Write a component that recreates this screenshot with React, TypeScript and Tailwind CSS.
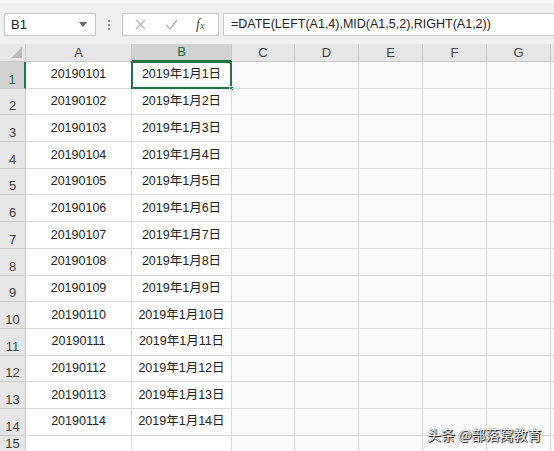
import React from 'react';

const cols = [
  { key: 'A', w: 'w-[106px]' },
  { key: 'B', w: 'w-[100px]' },
  { key: 'C', w: 'w-[63px]' },
  { key: 'D', w: 'w-[64px]' },
  { key: 'E', w: 'w-[64px]' },
  { key: 'F', w: 'w-[64px]' },
  { key: 'G', w: 'w-[64px]' },
];

const rows = Array.from({ length: 14 }, (_, i) => ({
  n: i + 1,
  a: `201901${String(i + 1).padStart(2, '0')}`,
  b: `2019年1月${i + 1}日`,
}));

const font = "font-['Liberation_Sans','Noto_Sans_CJK_SC',sans-serif]";

const Corner = () => (
  <div className="relative w-[26px] shrink-0 h-full border-r border-b border-[#c8c8c8] bg-[#e6e6e6]">
    <svg className="absolute right-[3px] bottom-[3px]" width="11" height="11" viewBox="0 0 11 11">
      <polygon points="11,0 11,11 0,11" fill="#b9b9b9" />
    </svg>
  </div>
);

const App = () => {
  return (
    <div className={`relative w-[554px] h-[451px] overflow-hidden bg-[#f0f0f0] ${font} text-[#222]`}>
      {/* formula bar */}
      <div className="h-[44px] border-t-[3px] border-[#f8f8f8] flex items-start pt-[10px] pl-[4px]">
        <div className="w-[92px] h-[23px] bg-white border border-[#c6c6c6] flex items-center justify-between pl-[6px] pr-[8px] text-[13px]">
          <span>B1</span>
          <svg width="8" height="5" viewBox="0 0 8 5"><polygon points="0,0 8,0 4,5" fill="#666" /></svg>
        </div>
        <div className="w-[26px] h-[23px] flex flex-col items-center justify-center gap-[2px]">
          <span className="w-[2px] h-[2px] bg-[#9a9a9a]" />
          <span className="w-[2px] h-[2px] bg-[#9a9a9a]" />
          <span className="w-[2px] h-[2px] bg-[#9a9a9a]" />
        </div>
        <div className="w-[97px] h-[23px] bg-white border border-[#c6c6c6] flex items-center">
          <svg className="ml-[12px]" width="11" height="11" viewBox="0 0 11 11">
            <path d="M1 1 L10 10 M10 1 L1 10" stroke="#b5b5b5" strokeWidth="1.3" />
          </svg>
          <svg className="ml-[19px]" width="13" height="11" viewBox="0 0 13 11">
            <path d="M1 6 L5 10 L12 1" stroke="#b5b5b5" strokeWidth="1.5" fill="none" />
          </svg>
          <span className="ml-[18px] font-['Liberation_Serif',serif] italic text-[14px] text-[#444] leading-none">
            f<span className="text-[10px]">x</span>
          </span>
        </div>
        <div className="ml-[4px] flex-1 h-[23px] bg-white border border-[#c6c6c6] border-r-0 flex items-center pl-[7px] text-[12.5px] whitespace-nowrap">
          =DATE(LEFT(A1,4),MID(A1,5,2),RIGHT(A1,2))
        </div>
      </div>

      {/* column headers */}
      <div className="h-[18px] flex bg-[#e6e6e6] text-[13px] text-[#444]">
        <Corner />
        {cols.map((c) => (
          <div
            key={c.key}
            className={`${c.w} shrink-0 flex items-center justify-center border-r border-[#c8c8c8] ${
              c.key === 'B' ? 'bg-[#d2d2d2] border-b-2 border-b-[#217346] text-[#1e6b3f]' : 'border-b border-b-[#c8c8c8]'
            }`}
          >
            {c.key}
          </div>
        ))}
        <div className="flex-1 border-b border-[#c8c8c8]" />
      </div>

      {/* rows */}
      {[...rows, { n: 15, a: '', b: '' }].map((r) => (
        <div key={r.n} className={`${r.n === 15 ? 'h-[16px]' : 'h-[26.7px]'} flex bg-[#fafafa] text-[12.5px]`}>
          <div
            className={`w-[26px] shrink-0 flex items-end justify-center text-[13px] leading-[15px] border-b border-[#c8c8c8] ${
              r.n === 1 ? 'bg-[#d2d2d2] border-r-2 border-r-[#217346] text-[#1e6b3f]' : 'bg-[#e6e6e6] border-r border-r-[#c8c8c8] text-[#444]'
            } ${r.n === 15 ? '' : 'pb-[1px]'}`}
          >
            {r.n}
          </div>
          {cols.map((c) => (
            <div
              key={c.key}
              className={`${c.w} shrink-0 relative flex items-center justify-center border-r border-b border-[#d9d9d9] ${
                c.key === 'A' || c.key === 'B' ? 'bg-white' : ''
              }`}
            >
              {c.key === 'A' ? r.a : c.key === 'B' ? r.b : ''}
              {c.key === 'B' && r.n === 1 && (
                <>
                  <div className="absolute -left-[1px] -top-[1px] -right-[1px] -bottom-[1px] border-2 border-[#217346]" />
                  <div className="absolute -right-[3px] -bottom-[3px] w-[5px] h-[5px] bg-[#217346] border border-white" />
                </>
              )}
            </div>
          ))}
          <div className="flex-1 border-b border-[#d9d9d9]" />
        </div>
      ))}

      {/* watermark */}
      <div className="absolute left-[427px] top-[424px] text-[14px] text-white font-['Noto_Sans_CJK_SC',sans-serif] [text-shadow:0_0_1px_#000,1px_1px_1px_#000]">
        头条 @部落窝教育
      </div>
    </div>
  );
};

export default App;
